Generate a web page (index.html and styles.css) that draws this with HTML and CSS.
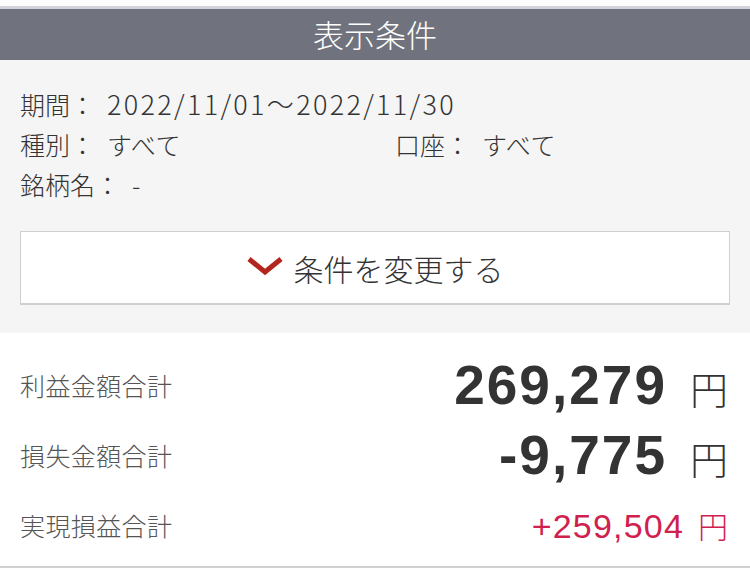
FILE: index.html
```html
<!DOCTYPE html>
<html lang="ja">
<head>
    <meta charset="utf-8" />
    <title>表示条件</title>
    <link rel="stylesheet" href="styles.css">
</head>
<body>
<div class="topgap"></div>
<h1 class="title">表示条件</h1>

<section class="cond">
    <div class="line">期間：<span class="v date">2022/11/01〜2022/11/30</span></div>
    <div class="line pair">
        <span class="half">種別：<span class="v">すべて</span></span>
        <span class="half">口座：<span class="v">すべて</span></span>
    </div>
    <div class="line">銘柄名：<span class="v">-</span></div>
    <button class="change">
        <svg class="chev" width="36" height="20" viewBox="0 0 36 20">
            <path d="M2 3 L18 16 L34 3" fill="none" stroke="#b3261e" stroke-width="5"/>
        </svg>
        条件を変更する
    </button>
</section>

<section class="sums">
    <div class="row">
        <span class="label">利益金額合計</span>
        <span class="val big">269,279<em>円</em></span>
    </div>
    <div class="row">
        <span class="label">損失金額合計</span>
        <span class="val big">-9,775<em>円</em></span>
    </div>
    <div class="row">
        <span class="label">実現損益合計</span>
        <span class="val plus">+259,504<em>円</em></span>
    </div>
</section>
</body>
</html>
```

FILE: styles.css
```css
body {
    margin: 0;
    background: #fff;
    font-family: "Noto Sans CJK JP", "Liberation Sans", sans-serif;
    font-weight: 300;
    color: #333;
}
.topgap {
    height: 6px;
    background: #fdfdfd;
}
.title {
    margin: 0;
    height: 51px;
    line-height: 50px;
    border-top: 3px solid #d2d3da;
    background: #70737e;
    color: #fff;
    font-size: 31px;
    font-weight: 300;
    text-align: center;
}
.cond {
    background: #f5f5f5;
    padding: 24px 20px 28px;
}
    .cond .line {
        font-size: 25px;
        line-height: 40px;
        color: #333;
    }
    .cond .v {
        margin-left: 12px;
        letter-spacing: 0.6px;
    }
    .cond .date {
        font-size: 27px;
        letter-spacing: 2.3px;
    }
    .cond .pair {
        display: flex;
    }
    .cond .half {
        flex: none;
        width: 375px;
    }
.change {
    display: flex;
    align-items: center;
    justify-content: center;
    gap: 11px;
    width: 100%;
    height: 74px;
    margin-top: 27px;
    background: #fff;
    border: 1px solid #cfcfcf;
    border-bottom-width: 2px;
    font-family: inherit;
    font-weight: 300;
    font-size: 30px;
    color: #333;
    padding: 0;
}
    .change .chev {
        margin-top: -4px;
    }
.sums {
    padding: 17px 22px 6px 20px;
    border-bottom: 2px solid #d0d0d0;
}
.row {
    display: flex;
    align-items: center;
    justify-content: space-between;
    height: 70px;
}
.label {
    font-size: 25px;
    letter-spacing: 0.4px;
    color: #555;
}
.val {
    font-family: "Liberation Sans", "Noto Sans CJK JP", sans-serif;
}
    .val em {
        font-family: "Noto Sans CJK JP", sans-serif;
        font-style: normal;
        font-weight: 300;
        letter-spacing: 0;
    }
.big {
    font-size: 55px;
    font-weight: bold;
    color: #333;
    letter-spacing: 2px;
}
    .big em {
        font-size: 38px;
        margin-left: 23px;
    }
.plus {
    font-size: 34px;
    font-weight: normal;
    color: #d0214e;
    letter-spacing: 1.2px;
}
    .plus em {
        font-size: 30px;
        margin-left: 14px;
    }
```
